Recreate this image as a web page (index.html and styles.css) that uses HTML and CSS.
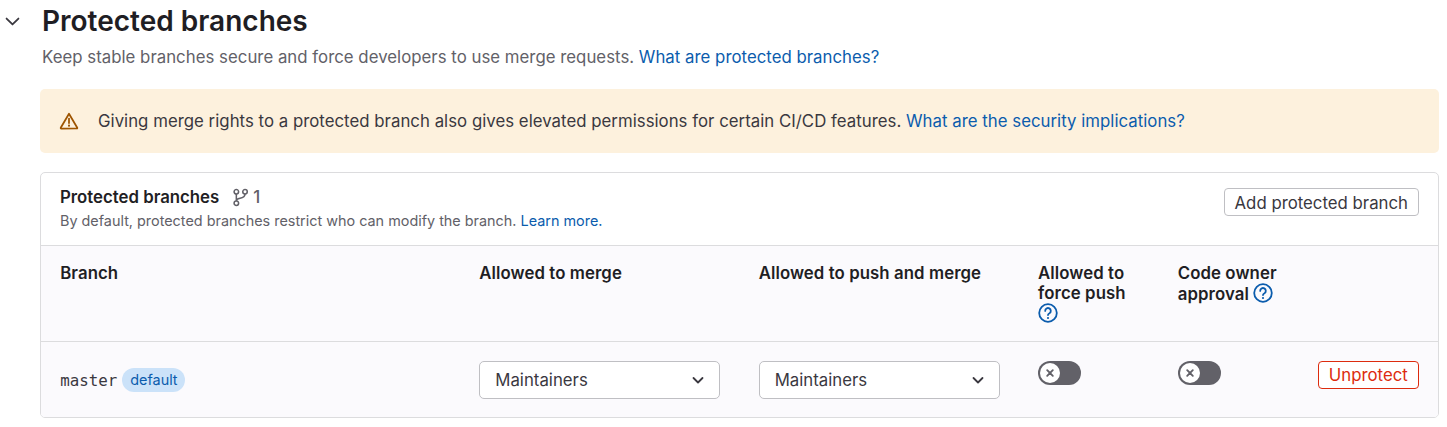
FILE: index.html
```html
<!DOCTYPE html>
<html lang="en">

    <head>
        <meta charset="UTF-8">
        <meta name="viewport" content="width=device-width, initial-scale=1.0">
        <title>Protected branches</title>
        <link rel="stylesheet" href="styles.css">
    </head>

    <body>
        <section class="settings">
            <header class="settings-header">
                <button class="btn-collapse" aria-label="Collapse">
                    <svg width="19" height="19" viewBox="0 0 16 16" class="icon-chevron">
                        <path d="M3 5.5l5 5 5-5" fill="none" stroke="currentColor" stroke-width="1.5" stroke-linecap="round" stroke-linejoin="round" />
                    </svg>
                </button>
                <div>
                    <h1>Protected branches</h1>
                    <p class="settings-desc">Keep stable branches secure and force developers to use merge requests. <a href="#">What are protected branches?</a></p>
                </div>
            </header>

            <div class="alert">
                <svg width="20" height="20" viewBox="0 0 16 16" class="icon-warning">
                    <path d="M8 2.2L14.6 13.4a.4.4 0 0 1-.35.6H1.75a.4.4 0 0 1-.35-.6z" fill="none" stroke="currentColor" stroke-width="1.4" stroke-linejoin="round" />
                    <path d="M8 6v3.6" stroke="currentColor" stroke-width="1.4" stroke-linecap="round" />
                    <circle cx="8" cy="11.7" r=".85" fill="currentColor" />
                </svg>
                <p>Giving merge rights to a protected branch also gives elevated permissions for certain CI/CD features. <a href="#">What are the security implications?</a></p>
            </div>

            <div class="card">
                <div class="card-header">
                    <div>
                        <div class="card-title">
                            <strong>Protected branches</strong>
                            <span class="count">
                                <svg width="19" height="19" viewBox="0 0 16 16" fill="none" stroke="currentColor" stroke-width="1.3">
                                    <circle cx="4.5" cy="3.2" r="1.9" />
                                    <circle cx="11.8" cy="3.2" r="1.9" />
                                    <circle cx="4.5" cy="12.8" r="1.9" />
                                    <path d="M4.5 5.1v5.8M11.8 5.1c0 2.6-2.2 3.2-4.2 3.6-1.6.3-3.1.9-3.1 2.2" />
                                </svg>
                                1
                            </span>
                        </div>
                        <p class="card-desc">By default, protected branches restrict who can modify the branch. <a href="#">Learn more.</a></p>
                    </div>
                    <button class="btn">Add protected branch</button>
                </div>

                <div class="branch-table">
                    <div class="row row-head">
                        <div>Branch</div>
                        <div>Allowed to merge</div>
                        <div>Allowed to push and merge</div>
                        <div>Allowed to force push
                            <svg class="icon-help" width="20" height="20" viewBox="0 0 20 20">
                                <circle cx="10" cy="10" r="8.8" fill="none" stroke="currentColor" stroke-width="1.8" />
                                <path d="M7.2 7.9a2.8 2.8 0 1 1 4.3 2.3c-1 .6-1.5 1-1.5 1.9" fill="none" stroke="currentColor" stroke-width="1.8" stroke-linecap="round" />
                                <circle cx="10" cy="15" r="1.1" fill="currentColor" />
                            </svg>
                        </div>
                        <div>Code owner approval
                            <svg class="icon-help" width="20" height="20" viewBox="0 0 20 20">
                                <circle cx="10" cy="10" r="8.8" fill="none" stroke="currentColor" stroke-width="1.8" />
                                <path d="M7.2 7.9a2.8 2.8 0 1 1 4.3 2.3c-1 .6-1.5 1-1.5 1.9" fill="none" stroke="currentColor" stroke-width="1.8" stroke-linecap="round" />
                                <circle cx="10" cy="15" r="1.1" fill="currentColor" />
                            </svg>
                        </div>
                        <div></div>
                    </div>

                    <div class="row row-body">
                        <div class="branch-name">
                            <code>master</code>
                            <span class="badge">default</span>
                        </div>
                        <div>
                            <button class="dropdown">Maintainers
                                <svg width="14" height="14" viewBox="0 0 14 14">
                                    <path d="M2.5 5l4.5 4.5L11.5 5" fill="none" stroke="currentColor" stroke-width="1.8" stroke-linecap="round" stroke-linejoin="round" />
                                </svg>
                            </button>
                        </div>
                        <div>
                            <button class="dropdown">Maintainers
                                <svg width="14" height="14" viewBox="0 0 14 14">
                                    <path d="M2.5 5l4.5 4.5L11.5 5" fill="none" stroke="currentColor" stroke-width="1.8" stroke-linecap="round" stroke-linejoin="round" />
                                </svg>
                            </button>
                        </div>
                        <div>
                            <span class="toggle">
                                <span class="toggle-knob">
                                    <svg width="10" height="10" viewBox="0 0 10 10">
                                        <path d="M2.2 2.2l5.6 5.6M7.8 2.2l-5.6 5.6" stroke="currentColor" stroke-width="1.9" stroke-linecap="round" />
                                    </svg>
                                </span>
                            </span>
                        </div>
                        <div>
                            <span class="toggle">
                                <span class="toggle-knob">
                                    <svg width="10" height="10" viewBox="0 0 10 10">
                                        <path d="M2.2 2.2l5.6 5.6M7.8 2.2l-5.6 5.6" stroke="currentColor" stroke-width="1.9" stroke-linecap="round" />
                                    </svg>
                                </span>
                            </span>
                        </div>
                        <div class="cell-action">
                            <button class="btn btn-danger">Unprotect</button>
                        </div>
                    </div>
                </div>
            </div>
        </section>
    </body>

</html>
```

FILE: styles.css
```css
:root {
    --text-main: #1f1e24;
    --text-body: #3a383f;
    --text-muted: #626168;
    --link: #0b5cad;
    --border: #dcdcde;
}

* {
    box-sizing: border-box;
    margin: 0;
    padding: 0;
    font-family: 'Inter', 'Noto Sans', sans-serif;
}

body {
    background: white;
    color: var(--text-body);
    font-size: 16.8px;
    overflow: hidden;
}

a {
    color: var(--link);
    text-decoration: none;
}

button {
    background: none;
    border: none;
    cursor: pointer;
}

svg {
    flex-shrink: 0;
}

.settings {
    padding: 0 8px 0 40px;
}

.settings-header {
    display: flex;
    position: relative;
    padding-left: 2px;
}

.btn-collapse {
    position: absolute;
    left: -37px;
    top: 12px;
    width: 19px;
    height: 19px;
    color: #3a383f;
}

.icon-chevron {
    display: block;
}

h1 {
    font-size: 28px;
    font-weight: 600;
    line-height: 42px;
    color: var(--text-main);
}

.settings-desc {
    margin-top: 4px;
    line-height: 22px;
    letter-spacing: 0.02px;
    color: var(--text-muted);
}

.alert {
    display: flex;
    align-items: center;
    gap: 19px;
    height: 64px;
    margin-top: 21px;
    padding: 0 19px 1px;
    background: #fdf1dd;
    border-radius: 5px;
    letter-spacing: 0.023px;
}

.icon-warning {
    color: #9e5400;
}

.card {
    margin-top: 19px;
    border: 1px solid var(--border);
    border-radius: 5px;
    overflow: hidden;
}

.card-header {
    display: flex;
    justify-content: space-between;
    align-items: flex-start;
    height: 72px;
    padding: 14px 19px 0;
}

.card-title {
    display: flex;
    align-items: center;
    gap: 12px;
    height: 20px;
    color: var(--text-main);
}

.card-title strong {
    font-weight: 600;
}

.count {
    display: flex;
    align-items: center;
    gap: 3px;
    color: var(--text-muted);
    font-weight: 500;
}

.card-desc {
    margin-top: 5px;
    font-size: 14.4px;
    line-height: 18px;
    color: var(--text-muted);
}

.btn {
    margin-top: 1px;
    padding: 1px 10px 0;
    height: 28px;
    border: 1px solid #bfbfc3;
    border-radius: 4px;
    background: white;
    font-size: 16.8px;
    color: var(--text-body);
}

.btn-danger {
    margin-top: 0;
    padding-top: 0;
    border-color: #dd2b0e;
    color: #dd2b0e;
}

.branch-table {
    background: #fbfafd;
}

.row {
    display: grid;
    grid-template-columns: 30% 20% 20% 10% 10% 10%;
    border-top: 1px solid var(--border);
}

.row > div {
    padding-left: 19.2px;
}

.row-head {
    height: 96px;
    padding-top: 17px;
    font-weight: 600;
    line-height: 20px;
    letter-spacing: 0.08px;
    color: var(--text-main);
}

.row-head > div {
    padding-right: 19.2px;
}

.icon-help {
    color: var(--link);
    vertical-align: -3.5px;
}

.row-body {
    height: 76px;
    padding-top: 19px;
}

.branch-name {
    display: flex;
    align-items: center;
    gap: 5px;
    height: 38px;
}

code {
    font-family: 'DejaVu Sans Mono', monospace;
    font-size: 15.8px;
    color: var(--text-body);
}

.badge {
    padding: 0 7px 0 8px;
    height: 24px;
    line-height: 24px;
    border-radius: 12px;
    background: #cbe2f9;
    color: var(--link);
    font-size: 14.4px;
}

.dropdown {
    display: flex;
    justify-content: space-between;
    align-items: center;
    width: 241px;
    height: 38px;
    padding: 0 14px 0 15px;
    background: white;
    border: 1px solid #bfbfc3;
    border-radius: 5px;
    font-size: 16.8px;
    color: var(--text-body);
}

.toggle {
    display: flex;
    align-items: center;
    width: 43px;
    height: 24px;
    padding-left: 2px;
    border-radius: 12px;
    background: #626168;
}

.toggle-knob {
    display: flex;
    align-items: center;
    justify-content: center;
    width: 20px;
    height: 20px;
    border-radius: 50%;
    background: white;
    color: #626168;
}

.row > .cell-action {
    display: flex;
    justify-content: flex-end;
    align-items: flex-start;
    padding: 0 19.2px 0 0;
}
```
